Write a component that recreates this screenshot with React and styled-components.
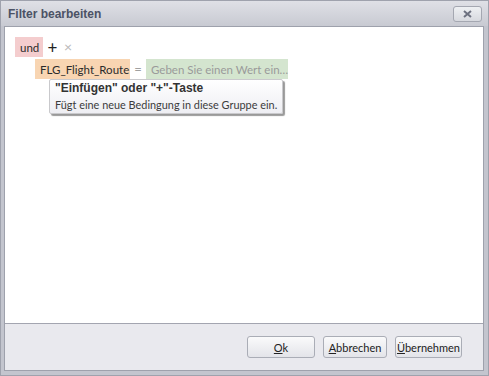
import React from 'react'
import styled, { createGlobalStyle } from 'styled-components'

const Global = createGlobalStyle`
  html, body { margin: 0; padding: 0; }
  body { font-family: Lato, "Liberation Sans", sans-serif; font-size: 11px; }
`

const Window = styled.div`
  width: 489px;
  height: 376px;
  box-sizing: border-box;
  background: #c3c5ce;
  border: 1px solid #9fa2ad;
  display: flex;
  flex-direction: column;
  padding: 0 4px 4px 3px;
`

const TitleBar = styled.div`
  height: 25px;
  display: flex;
  align-items: center;
  justify-content: space-between;
  background: linear-gradient(#dfe0e6, #c8cad2);
  margin: 0 -4px 0 -3px;
  padding-left: 7px;
  padding-right: 6px;
`

const Title = styled.div`
  font-family: "Liberation Sans", sans-serif;
  font-weight: bold;
  font-size: 12px;
  color: #4b5265;
`

const CloseButton = styled.div`
  width: 27px;
  height: 14px;
  border: 1px solid #a4a7b1;
  border-radius: 3px;
  background: linear-gradient(#eef0f3, #d7d9df);
  display: flex;
  align-items: center;
  justify-content: center;
`

const Frame = styled.div`
  flex: 1;
  display: flex;
  flex-direction: column;
  border: 1px solid #9ea1ac;
`

const Body = styled.div`
  flex: 1;
  background: #fff;
  padding: 10px 10px;
  position: relative;
`

const Row = styled.div`
  display: flex;
  align-items: center;
  height: 20px;
  margin-left: ${p => p.indent || 0}px;
  margin-bottom: 2px;
`

const Chip = styled.div`
  height: 20px;
  display: flex;
  align-items: center;
  padding: 0 5px;
  background: ${p => p.bg};
  color: ${p => p.color || '#2b2b2b'};
  box-sizing: border-box;
  width: ${p => p.w ? p.w + 'px' : 'auto'};
  white-space: nowrap;
  overflow: hidden;
  font-size: 11.5px;
`

const Glyph = styled.span`
  color: ${p => p.color};
  font-size: ${p => p.size}px;
  width: ${p => p.w}px;
  text-align: center;
  line-height: 1;
`

const Tooltip = styled.div`
  position: absolute;
  left: 44px;
  top: 52px;
  width: 234px;
  height: 35px;
  box-sizing: border-box;
  border: 1px solid #c9c9cc;
  border-radius: 2px;
  background: linear-gradient(#ffffff, #eeeef3);
  box-shadow: 2px 2px 1px rgba(0, 0, 0, 0.4);
  padding: 1px 5px;
  white-space: nowrap;
`

const TipTitle = styled.div`
  font-family: "Liberation Sans", sans-serif;
  font-weight: bold;
  font-size: 12px;
  line-height: 15px;
  color: #333;
`

const TipText = styled.div`
  font-size: 10.9px;
  line-height: 17px;
  color: #3c3c3c;
`

const Footer = styled.div`
  height: 46px;
  border-top: 1px solid #a3a5b0;
  background: #e9e9ee;
  display: flex;
  align-items: center;
  justify-content: flex-end;
  gap: 8px;
  padding-right: 21px;
`

const Button = styled.button`
  width: ${p => p.w}px;
  height: 22px;
  border: 1px solid #aaadb6;
  border-radius: 3px;
  background: linear-gradient(#fafafb, #e3e4e9);
  font-family: Lato, "Liberation Sans", sans-serif;
  font-size: 11px;
  color: #222;
  padding: 0;
  u { text-decoration: underline; }
`

export default function App() {
  return (
    <>
      <Global />
      <Window>
        <TitleBar>
          <Title>Filter bearbeiten</Title>
          <CloseButton>
            <svg width="9" height="8" viewBox="0 0 9 8">
              <path d="M1 1 L8 7 M8 1 L1 7" stroke="#6d7180" strokeWidth="2" />
            </svg>
          </CloseButton>
        </TitleBar>
        <Frame>
          <Body>
            <Row>
              <Chip bg="#f4cdce" w={28}>und</Chip>
              <Glyph color="#222" size={17} w={19}>+</Glyph>
              <Glyph color="#b8b8b8" size={14} w={12}>×</Glyph>
            </Row>
            <Row indent={20}>
              <Chip bg="#f8d5b2" w={95}>FLG_Flight_Route</Chip>
              <Glyph color="#a0a0a0" size={13} w={16}>=</Glyph>
              <Chip bg="#d4e5cf" color="#9a9a9a" w={142}>Geben Sie einen Wert ein…</Chip>
            </Row>
            <Tooltip>
              <TipTitle>"Einfügen" oder "+"-Taste</TipTitle>
              <TipText>Fügt eine neue Bedingung in diese Gruppe ein.</TipText>
            </Tooltip>
          </Body>
          <Footer>
            <Button w={68}><u>O</u>k</Button>
            <Button w={64}><u>A</u>bbrechen</Button>
            <Button w={67}><u>Ü</u>bernehmen</Button>
          </Footer>
        </Frame>
      </Window>
    </>
  )
}
